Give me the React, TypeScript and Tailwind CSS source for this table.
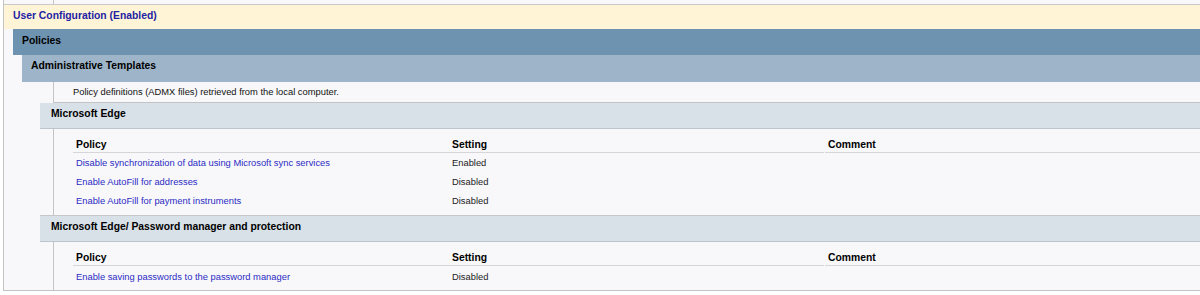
const policySections = [
  {
    title: "Microsoft Edge",
    rows: [
      { policy: "Disable synchronization of data using Microsoft sync services", setting: "Enabled" },
      { policy: "Enable AutoFill for addresses", setting: "Disabled" },
      { policy: "Enable AutoFill for payment instruments", setting: "Disabled" },
    ],
  },
  {
    title: "Microsoft Edge/ Password manager and protection",
    rows: [{ policy: "Enable saving passwords to the password manager", setting: "Disabled" }],
  },
];

const PolicyTable = ({
  rows,
  first,
}: {
  rows: { policy: string; setting: string }[];
  first: boolean;
}) => {
  return (
    <div className="ml-[49px] border-l border-[#c4c4c4]">
      <div className="ml-[19px]">
        {/* HEADER */}
        <div className="flex text-[10.35px] font-bold text-black leading-[12px]">
          <div className="flex w-[751px] h-[24px] pt-[10px] border-b border-[#d6d6d8]">
            <div className="w-[376px] pl-[3px]">Policy</div>
            <div className="w-[375px] pl-[3px]">Setting</div>
          </div>
          <div className="flex-1 ml-[1px] h-[24px] pt-[10px] pl-[3px] border-b border-[#d6d6d8]">
            Comment
          </div>
        </div>

        {/* ROWS */}
        <div className={first ? "pt-[4px] pb-[1px]" : "pt-[5px] h-[24px]"}>
          {rows.map((row) => (
            <div key={row.policy} className="flex h-[19px] text-[9.35px] leading-[12px]">
              <div className="w-[376px] pl-[3px] text-[#2b2bc4]">{row.policy}</div>
              <div className="w-[375px] pl-[3px] text-[#222]">{row.setting}</div>
              <div className="flex-1 pl-[4px]"></div>
            </div>
          ))}
        </div>
      </div>
    </div>
  );
};

export default function App() {
  return (
    <div className="w-[1200px] h-[295px] bg-white overflow-hidden font-['Liberation_Sans',Arial,sans-serif]">
      <div className="ml-[3px] border-l border-b border-[#c4c4c4] bg-[#f8f8fa]">
        {/* PREVIOUS SECTION TAIL */}
        <div className="h-[4px] ml-[49px] border-l border-[#c4c4c4]"></div>

        {/* USER CONFIGURATION */}
        <div className="h-[25px] border-t border-[#cacaca] bg-[#fff5d6] pl-[9px] pt-[5px] text-[10.35px] font-bold leading-[12px] text-[#2222a4]">
          User Configuration (Enabled)
        </div>

        {/* POLICIES */}
        <div className="ml-[9px] h-[26px] bg-[#6d93b1] pl-[9px] pt-[6px] text-[10.35px] font-bold leading-[12px] text-black">
          Policies
        </div>

        {/* ADMINISTRATIVE TEMPLATES */}
        <div className="ml-[18px] h-[27px] bg-[#9eb5c9] pl-[9px] pt-[5px] text-[10.35px] font-bold leading-[12px] text-black">
          Administrative Templates
        </div>

        {/* DESCRIPTION */}
        <div className="ml-[49px] h-[21px] border-l border-b border-[#c4c4c4] pl-[19px] pt-[4px] text-[9.35px] leading-[12px] text-[#111]">
          Policy definitions (ADMX files) retrieved from the local computer.
        </div>

        {policySections.map((section, i) => (
          <div key={section.title}>
            <div
              className={
                i === 0
                  ? "ml-[36px] h-[26px] border-b border-[#bcc4cc] bg-[#d8e1e8] pl-[11px] pt-[5px] text-[10.35px] font-bold leading-[12px] text-black"
                  : "ml-[36px] h-[27px] border-t border-[#c6c6c6] border-b border-b-[#bcc4cc] bg-[#d8e1e8] pl-[11px] pt-[5px] text-[10.35px] font-bold leading-[12px] text-black"
              }
            >
              {section.title}
            </div>
            <PolicyTable rows={section.rows} first={i === 0} />
          </div>
        ))}
      </div>
    </div>
  );
}
